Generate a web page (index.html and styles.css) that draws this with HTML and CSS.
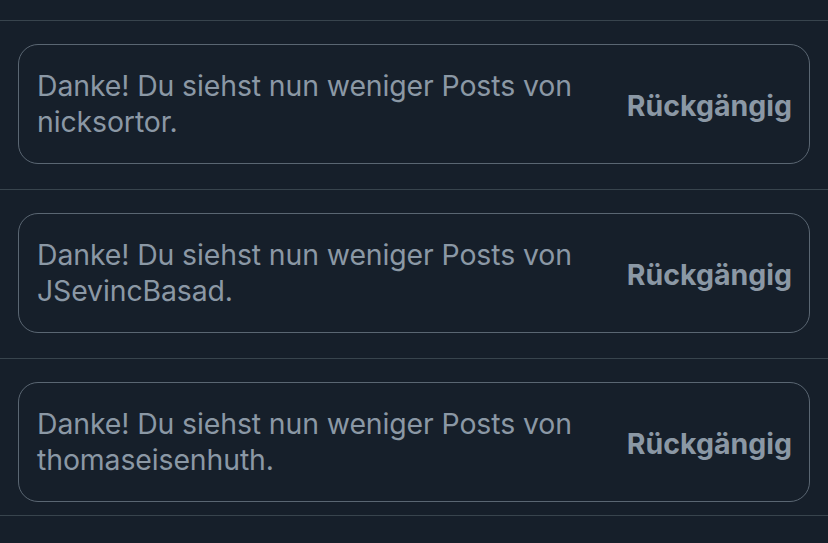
FILE: index.html
```html
<!DOCTYPE html>
<html lang="de">
<head>
<meta charset="utf-8">
<link rel="stylesheet" href="styles.css">
</head>
<body>
<div class="feed">
  <div class="item">
    <div class="notice">
      <p class="msg">Danke! Du siehst nun weniger Posts von nicksortor.</p>
      <button class="undo">Rückgängig</button>
    </div>
  </div>
  <div class="item">
    <div class="notice">
      <p class="msg">Danke! Du siehst nun weniger Posts von JSevincBasad.</p>
      <button class="undo">Rückgängig</button>
    </div>
  </div>
  <div class="item last">
    <div class="notice">
      <p class="msg">Danke! Du siehst nun weniger Posts von thomaseisenhuth.</p>
      <button class="undo">Rückgängig</button>
    </div>
  </div>
</div>
</body>
</html>
```
FILE: styles.css
```css
html, body {
  margin: 0;
  padding: 0;
  background: #161f2a;
  height: 100%;
}
body {
  font-family: Inter, "Noto Sans", sans-serif;
  color: #8b98a5;
}
.feed {
  padding-top: 20px;
}
.item {
  border-top: 1px solid #38444d;
  padding: 23px 18px 25px 18px;
}
.item.last {
  padding-bottom: 13px;
  border-bottom: 1px solid #38444d;
}
.notice {
  height: 118px;
  border: 1px solid #5a6672;
  border-radius: 20px;
  display: flex;
  align-items: center;
  justify-content: space-between;
  padding: 0 17px 0 18px;
}
.msg {
  margin: 0;
  font-size: 28.4px;
  line-height: 36px;
  width: 560px;
  letter-spacing: -0.1px;
}
.undo {
  background: none;
  border: 0;
  padding: 0;
  font-family: Inter, "Noto Sans", sans-serif;
  font-weight: 700;
  font-size: 28.5px;
  color: #8b98a5;
  margin-top: 2px;
}
```
